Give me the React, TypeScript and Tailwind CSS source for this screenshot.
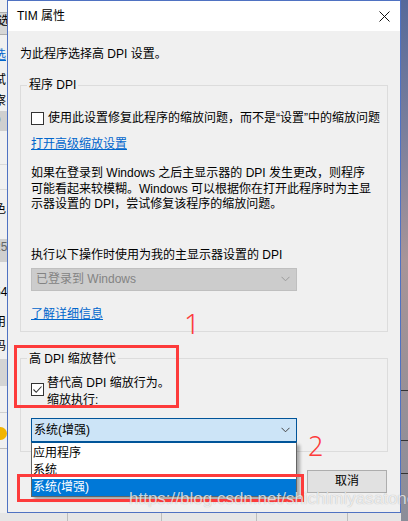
import React from "react";

const font = "font-['Liberation_Sans','Noto_Sans_CJK_SC',sans-serif]";

function Chevron({ color }: { color: string }) {
  return (
    <svg width="9" height="6" viewBox="0 0 9 6" className="shrink-0">
      <polyline points="0.5,0.8 4.5,4.8 8.5,0.8" fill="none" stroke={color} strokeWidth="1" />
    </svg>
  );
}

function Checkbox({ checked }: { checked?: boolean }) {
  return (
    <div className="w-[13px] h-[13px] shrink-0 border border-[#333] bg-white flex items-center justify-center">
      {checked && (
        <svg width="11" height="11" viewBox="0 0 11 11">
          <polyline points="1.5,5.5 4.2,8.3 9.5,2.5" fill="none" stroke="#333" strokeWidth="1.1" />
        </svg>
      )}
    </div>
  );
}

function LeftStrip() {
  return (
    <div className="w-[7px] h-full overflow-hidden bg-[#f0f0f0] flex flex-col text-[12px] leading-[16px] text-black whitespace-nowrap">
      <div className="h-[12px]" />
      <div className="h-[23px] bg-[#d6d6d6] border-y border-[#adadad] -ml-[6px] pl-[4px]">选</div>
      <div className="mt-[12px] h-[16px] -ml-[6px] text-[#0066cc] underline">选</div>
      <div className="mt-[9px] h-[16px] -ml-[6px]">试</div>
      <div className="mt-[5px] h-[16px] -ml-[6px]">察</div>
      <div className="mt-[2px] h-[20px] bg-[#cfcfcf] -ml-[6px] text-[#666]">o</div>
      <div className="mt-[33px] h-px bg-[#d9d9d9]" />
      <div className="mt-[24px] h-px bg-[#d9d9d9]" />
      <div className="mt-[11px] h-[16px] -ml-[6px]">色</div>
      <div className="mt-[22px] h-[23px] bg-[#cfcfcf] -ml-[6px] text-[#666]">25</div>
      <div className="mt-[22px] h-[16px] -ml-[6px]">54</div>
      <div className="mt-[14px] h-[16px] -ml-[6px]">用</div>
      <div className="mt-[8px] h-[16px] -ml-[6px]">码</div>
      <div className="mt-[5px] h-[27px] bg-[#d4d4d4]" />
      <div className="mt-[26px] h-px bg-[#d0d0d0]" />
      <div className="mt-[14px] h-[13px] w-[13px] -ml-[6px] rounded-full bg-[linear-gradient(90deg,#2a6cc8_50%,#f2b400_50%)]" />
      <div className="mt-[8px] h-px bg-[#bdbdbd]" />
    </div>
  );
}

function RightStrip() {
  return (
    <div className="w-[7px] h-full flex flex-col bg-[linear-gradient(180deg,#56699a_0%,#7a7f9c_25%,#a89598_50%,#9c9196_70%,#8b8d99_100%)]">
      <div className="h-[390px]" />
      <div className="h-px bg-[#333]" />
      <div className="h-[49px]" />
      <div className="h-px bg-[#333]" />
      <div className="h-[32px]" />
      <div className="h-px bg-[#333]" />
    </div>
  );
}

function Dialog() {
  return (
    <div className="relative w-[394px] h-[513px] border border-[#4f72c2] bg-[#f0f0f0] flex flex-col text-[12px] text-black">
      <div className="h-[30px] bg-white flex items-center justify-between pl-[9px] pr-[10px]">
        <span className="leading-[16px]">TIM 属性</span>
        <svg width="11" height="11" viewBox="0 0 11 11">
          <line x1="0.5" y1="0.5" x2="10.5" y2="10.5" stroke="#111" strokeWidth="1" />
          <line x1="10.5" y1="0.5" x2="0.5" y2="10.5" stroke="#111" strokeWidth="1" />
        </svg>
      </div>

      <div className="flex flex-col px-[12px] pt-[15px] pb-[19px]">
        <div className="leading-[16px]">为此程序选择高 DPI 设置。</div>

        <fieldset className="mt-[15px] border border-[#dcdcdc] pl-[10px] pb-[9px] flex flex-col items-start">
          <legend className="-ml-[4px] px-[2px] leading-[16px]">程序 DPI</legend>
          <div className="mt-[17px] flex items-center gap-[4px] leading-[16px] whitespace-nowrap">
            <Checkbox />
            <span>使用此设置修复此程序的缩放问题，而不是“设置”中的缩放问题</span>
          </div>
          <div className="mt-[10px] leading-[16px] text-[#0066cc] underline">打开高级缩放设置</div>
          <div className="mt-[14px] leading-[15.5px]">
            如果在登录到 Windows 之后主显示器的 DPI 发生更改，则程序
            <br />
            可能看起来较模糊。Windows 可以根据你在打开此程序时为主显
            <br />
            示器设置的 DPI，尝试修复该程序的缩放问题。
          </div>
          <div className="mt-[34px] leading-[16px]">执行以下操作时使用为我的主显示器设置的 DPI</div>
          <div className="mt-[5px] w-[266px] h-[23px] bg-[#cccccc] border border-[#bfbfbf] flex items-center justify-between pl-[4px] pr-[6px] text-[#838383]">
            <span className="leading-[16px]">已登录到 Windows</span>
            <Chevron color="#9a9a9a" />
          </div>
          <div className="mt-[15px] leading-[16px] text-[#0066cc] underline">了解详细信息</div>
        </fieldset>

        <fieldset className="mt-[19px] border border-[#dcdcdc] pl-[10px] pb-[9px] flex flex-col items-start">
          <legend className="-ml-[4px] px-[2px] leading-[16px]">高 DPI 缩放替代</legend>
          <div className="mt-[8px] flex items-start gap-[3px]">
            <div className="mt-[8px]">
              <Checkbox checked />
            </div>
            <div className="leading-[17px]">
              替代高 DPI 缩放行为。
              <br />
              缩放执行:
            </div>
          </div>
          <div className="relative mt-[9px] w-[266px]">
            <div className="h-[24px] bg-[#cce4f7] border border-[#005499] flex items-center justify-between pl-[2px] pr-[6px]">
              <span className="leading-[16px]">系统(增强)</span>
              <Chevron color="#444" />
            </div>
            <div className="absolute left-0 top-full w-full z-10 bg-white border border-[#646464] border-t-[#005499] shadow-[3px_3px_3px_rgba(0,0,0,0.3)] flex flex-col leading-[17px]">
              <div className="h-[18px] pt-[2px] pl-[1px]">应用程序</div>
              <div className="h-[18px] pt-[1px] pl-[1px]">系统</div>
              <div className="h-[17px] pl-[1px] bg-[#0078d7] text-white">系统(增强)</div>
            </div>
          </div>
        </fieldset>

        <div className="mt-[18px] flex justify-end pr-px">
          <div className="w-[80px] h-[23px] bg-[#e1e1e1] border border-[#adadad] flex items-center justify-center leading-[16px]">
            取消
          </div>
        </div>
      </div>
    </div>
  );
}

function BottomStrip() {
  return (
    <div className="h-[8px] bg-[#e6e6e6] flex">
      <div className="w-[61px] border-r border-[#bdbdbd]" />
      <div className="w-[94px] border-r border-[#bdbdbd]" />
      <div className="w-[95px] border-r border-[#bdbdbd]" />
      <div className="w-[91px] border-r border-[#bdbdbd]" />
      <div className="flex-1" />
    </div>
  );
}

export default function App() {
  return (
    <div className={`relative w-[408px] h-[521px] overflow-hidden bg-[#e6e6e6] ${font}`}>
      <div className="flex h-full">
        <div className="flex flex-col">
          <div className="h-[513px]">
            <LeftStrip />
          </div>
          <div className="h-[8px] w-[7px] bg-[#e6e6e6]" />
        </div>
        <div className="flex flex-col">
          <Dialog />
          <BottomStrip />
        </div>
        <RightStrip />
      </div>

      {/* annotations drawn over the screenshot */}
      <div className="absolute left-[14px] top-[345px] w-[165px] h-[63px] border-[3px] border-[#fd3b3b]" />
      <div className="absolute left-[17px] top-[474px] w-[287px] h-[28px] border-[3px] border-[#fd3b3b] z-20" />
      <div className="absolute left-[184px] top-[306px] text-[28px] leading-[34px] text-[#fd3b3b] font-['Noto_Sans',sans-serif] font-light">1</div>
      <div className="absolute left-[308px] top-[430px] text-[27px] leading-[32px] text-[#fd3b3b] font-['Noto_Sans',sans-serif] font-light">2</div>
      <div className="absolute left-[129px] top-[488px] z-30 text-[17px] leading-[22px] text-white/75 font-['Liberation_Sans',sans-serif] [text-shadow:0_0_1px_rgba(0,0,0,0.3)]">
        https://blog.csdn.net/shichimiyasatone
      </div>
    </div>
  );
}
